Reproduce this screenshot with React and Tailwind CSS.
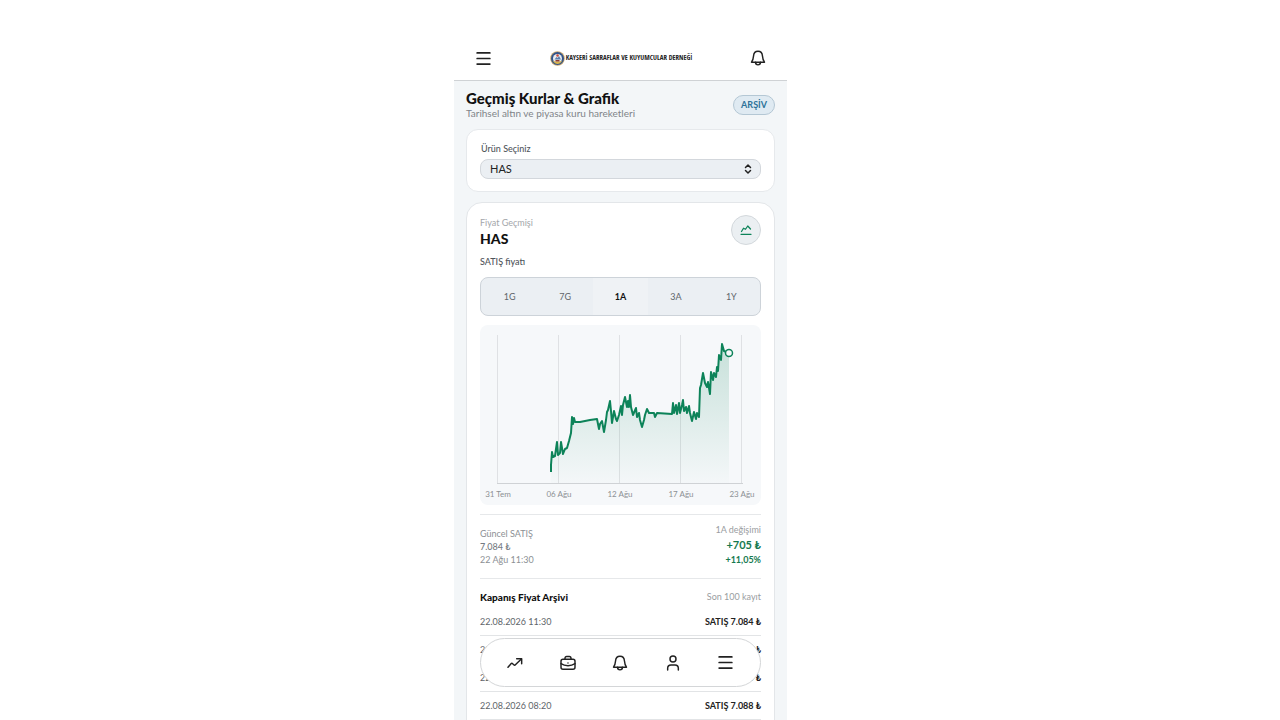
import React, { useState } from "react";
import { ChevronsUpDown, Menu } from "lucide-react";

const ranges = ["1G", "7G", "1A", "3A", "1Y"];

const closings = [
  { date: "22.08.2026 11:30", price: "7.084" },
  { date: "22.08.2026 10:20", price: "7.084" },
  { date: "22.08.2026 09:20", price: "7.086" },
  { date: "22.08.2026 08:20", price: "7.088" },
];

const axisTicks = [
  { x: 18, label: "31 Tem" },
  { x: 79, label: "06 Ağu" },
  { x: 140, label: "12 Ağu" },
  { x: 201, label: "17 Ağu" },
  { x: 262, label: "23 Ağu" },
];

const pricePoints = [
  [71, 147], [71, 140], [72, 127], [73, 132], [75, 131], [77, 117], [78, 130], [80, 128],
  [81, 117], [83, 129], [85, 124], [87, 123], [89, 116], [91, 108], [92, 92], [93, 99],
  [94, 93], [95, 97], [100, 97], [110, 95], [117, 94], [119, 104], [120, 99], [122, 96],
  [124, 107], [126, 95], [127, 87], [128, 85], [130, 76], [131, 86], [132, 98], [134, 86],
  [136, 94], [137, 96], [139, 90], [141, 81], [142, 90], [143, 80], [145, 72], [147, 82],
  [148, 76], [149, 82], [150, 70], [151, 82], [153, 90], [156, 83], [157, 92], [159, 88],
  [160, 95], [162, 102], [164, 95], [165, 90], [167, 84], [169, 88], [174, 88], [175, 92],
  [177, 88], [192, 89], [193, 78], [194, 88], [196, 80], [197, 89], [199, 78], [200, 88],
  [202, 80], [203, 75], [204, 86], [206, 82], [207, 88], [209, 81], [210, 88], [212, 96],
  [214, 87], [216, 94], [217, 88], [219, 92], [220, 63], [221, 60], [223, 48], [225, 58],
  [227, 62], [228, 57], [230, 69], [231, 47], [233, 55], [234, 48], [236, 52], [237, 42],
  [238, 46], [239, 30], [241, 35], [242, 19], [244, 26], [249, 28],
];

function BellIcon({ className }) {
  return (
    <svg className={className} viewBox="0 0 24 24" fill="none" stroke="currentColor" strokeWidth="2.2" strokeLinecap="round" strokeLinejoin="round" aria-hidden="true">
      <path d="M12 2C8 2 5.600 5 5.300 9 5 13.500 4.500 15 2.300 18.300h19.400C19.500 15 19 13.500 18.700 9 18.400 5 16 2 12 2z" />
      <path d="M8.300 18.500c0 2.300 1.600 3.800 3.700 3.800s3.700-1.500 3.700-3.800" />
    </svg>
  );
}

function TrendIcon({ className }) {
  return (
    <svg className={className} viewBox="0 0 24 24" fill="none" stroke="currentColor" strokeWidth="2.2" strokeLinecap="round" strokeLinejoin="round" aria-hidden="true">
      <path d="M1.500 18.500l4.500-5.500c.8-.9 1.700-.9 2.500 0l1.700 1.700c.8.8 1.700.8 2.400-.1L21.500 6" />
      <path d="M14.500 5.500H22V13" />
    </svg>
  );
}

function BriefcaseIcon({ className }) {
  return (
    <svg className={className} viewBox="0 0 24 24" fill="none" stroke="currentColor" strokeWidth="2.2" strokeLinecap="round" strokeLinejoin="round" aria-hidden="true">
      <rect x="1.500" y="6.500" width="21" height="15" rx="3" />
      <path d="M7.500 6.500V5c0-1.700 1-2.800 2.500-2.800h4c1.500 0 2.500 1.100 2.500 2.800v1.500" />
      <path d="M1.500 13c3 2 6.500 3 10.500 3s7.500-1 10.500-3M12 12v.1" />
    </svg>
  );
}

function PersonIcon({ className }) {
  return (
    <svg className={className} viewBox="0 0 24 24" fill="none" stroke="currentColor" strokeWidth="2.2" strokeLinecap="round" strokeLinejoin="round" aria-hidden="true">
      <circle cx="12" cy="6" r="4.500" />
      <path d="M4 22.500V20c0-3 2-5 5-5h6c3 0 5 2 5 5v2.500" />
    </svg>
  );
}

function ChartIcon({ className }) {
  return (
    <svg className={className} viewBox="0 0 24 24" fill="none" stroke="currentColor" strokeWidth="2.500" strokeLinecap="round" strokeLinejoin="round" aria-hidden="true">
      <path d="M3 15l4-6.500 4 2 4.500-6.500 5.500 6" />
      <path d="M2 20.500h20" />
    </svg>
  );
}

function Emblem({ className }) {
  return (
    <svg className={className} viewBox="0 0 30 30" aria-hidden="true">
      <circle cx="15" cy="15" r="14.500" fill="#c9a66b" />
      <circle cx="15" cy="15" r="13" fill="#31548c" />
      <circle cx="15" cy="15" r="9" fill="#e9edf0" />
      <path d="M5 19c3 5 7 7 10 7s7-2 10-7c-3 2-6 2-10 2s-7 0-10-2z" fill="#d9b44a" />
      <path d="M9 17l4-5 2 2 3-4 4 7z" fill="#5d7fae" />
      <circle cx="15" cy="9" r="2.500" fill="#c8493a" />
      <path d="M11 18h8v3h-8z" fill="#8c3b33" />
    </svg>
  );
}

function PriceChart() {
  const line = pricePoints.map(([x, y]) => `${x},${y}`).join(" ");

  return (
    <svg className="block w-full rounded-lg bg-[#f6f8fa]" viewBox="0 0 281 180" role="img" aria-label="HAS fiyat grafiği">
      <defs>
        <linearGradient id="priceFill" x1="0" y1="0" x2="0" y2="1">
          <stop offset="0" stopColor="#0d8359" stopOpacity="0.2" />
          <stop offset="1" stopColor="#0d8359" stopOpacity="0.01" />
        </linearGradient>
      </defs>
      {axisTicks.map((tick) => (
        <g key={tick.label}>
          <path d={`M${tick.x - 0.5} 10V159`} stroke="#dfe1e4" />
          <text x={tick.x} y="172" textAnchor="middle" fontSize="8" fill="#8c9094">{tick.label}</text>
        </g>
      ))}
      <path d="M17 158.500H263" stroke="#cfd2d5" />
      <polygon points={`71,158 ${line} 249,158`} fill="url(#priceFill)" />
      <polyline points={line} fill="none" stroke="#0d8359" strokeWidth="2" strokeLinejoin="round" />
      <circle cx="249" cy="28" r="3.500" fill="#f6f8fa" stroke="#0d8359" strokeWidth="1.500" />
    </svg>
  );
}

function Header() {
  return (
    <header className="flex h-[81px] shrink-0 items-center justify-between border-b border-[#cfd2d5] bg-white px-5 pt-9">
      <button type="button" aria-label="Menü" className="text-[#222]">
        <Menu className="size-[19px]" strokeWidth={2.2} />
      </button>
      <div className="flex items-center gap-px">
        <Emblem className="size-[15px]" />
        <span className="whitespace-nowrap font-['Open_Sans_Condensed','Noto_Sans_ExtraCondensed','Roboto_Condensed',sans-serif] text-[7px] leading-3 font-semibold text-[#222]">
          KAYSERİ SARRAFLAR VE KUYUMCULAR DERNEĞİ
        </span>
      </div>
      <button type="button" aria-label="Bildirimler" className="px-px text-[#222]">
        <BellIcon className="size-4" />
      </button>
    </header>
  );
}

function BottomNav() {
  return (
    <nav className="absolute inset-x-[26px] bottom-[33px] grid h-[49px] grid-cols-5 place-items-center rounded-full border border-[#d4d6d8] bg-white px-2 text-[#222]" aria-label="Alt menü">
      <button type="button" aria-label="Piyasa"><TrendIcon className="size-4" /></button>
      <button type="button" aria-label="Portföy"><BriefcaseIcon className="size-4" /></button>
      <button type="button" aria-label="Bildirimler"><BellIcon className="size-4" /></button>
      <button type="button" aria-label="Profil"><PersonIcon className="size-4" /></button>
      <button type="button" aria-label="Menü"><Menu className="size-[19px]" strokeWidth={2.2} /></button>
    </nav>
  );
}

export default function App() {
  const [range, setRange] = useState("1A");
  const [product, setProduct] = useState("HAS");

  return (
    <div className="flex h-screen justify-center bg-white pr-[39px] font-['Lato',sans-serif] text-[9px] leading-3">
      <div className="relative flex w-full max-w-[333px] flex-col overflow-hidden bg-[#f3f6f8]">
        <Header />

        <main className="flex flex-col px-3">
          <div className="flex items-center justify-between pt-[9px] pb-[9px]">
            <div>
              <h1 className="text-[15px] leading-4 font-black text-[#111]">Geçmiş Kurlar & Grafik</h1>
              <p className="text-[10px] leading-[14px] text-[#808488]">Tarihsel altın ve piyasa kuru hareketleri</p>
            </div>
            <span className="flex h-5 items-center rounded-full border border-[#b4c7d4] bg-[#dfeaf2] px-[7px] font-bold text-[#2d7299]">ARŞİV</span>
          </div>

          <section className="mb-[10px] flex flex-col gap-[3px] rounded-xl border border-[#e6e9ec] bg-white px-[13px] pt-3 pb-3">
            <label htmlFor="product" className="px-px leading-[14px] font-medium text-[#50555b]">Ürün Seçiniz</label>
            <div className="relative">
              <select
                id="product"
                value={product}
                onChange={(e) => setProduct(e.target.value)}
                className="block h-5 w-full appearance-none rounded-lg border border-[#d3d7dc] bg-[#ebeff3] px-[9px] text-[11px] leading-4 text-[#222]"
              >
                <option>HAS</option>
              </select>
              <ChevronsUpDown className="pointer-events-none absolute top-1 right-[7px] size-3 text-[#222]" strokeWidth={3} />
            </div>
          </section>

          <section className="rounded-t-2xl border border-[#e3e6e9] bg-white px-[13px] pt-3">
            <div className="flex items-start justify-between">
              <div>
                <p className="leading-4 text-[#a3a6aa]">Fiyat Geçmişi</p>
                <h2 className="text-[14px] leading-4 font-black text-[#111]">{product}</h2>
              </div>
              <button type="button" aria-label="Grafik" className="flex size-[30px] items-center justify-center rounded-full border border-[#d3d8dc] bg-[#ebeff2] text-[#0d8359]">
                <ChartIcon className="size-3" />
              </button>
            </div>
            <p className="mt-2 leading-[14px] font-medium text-[#50555b]">SATIŞ fiyatı</p>

            <div className="mt-2 grid h-[39px] grid-cols-5 rounded-lg border border-[#cdd3d9] bg-[#ebeff3] px-px">
              {ranges.map((item) => (
                <button
                  key={item}
                  type="button"
                  aria-pressed={item === range}
                  onClick={() => setRange(item)}
                  className={item === range ? "bg-[#eff2f5] font-bold text-[#111]" : "rounded-lg text-[#60656a]"}
                >
                  {item}
                </button>
              ))}
            </div>

            <div className="mt-[9px]">
              <PriceChart />
            </div>

            <div className="mt-[9px] flex items-end justify-between border-y border-[#e6e8ea] pt-[7px] pb-[11px]">
              <div className="text-[#8c9094]">
                <p className="leading-[14px]">Güncel SATIŞ</p>
                <p className="leading-3 font-medium text-[#757b82]">7.084 ₺</p>
                <p className="leading-[14px]">22 Ağu 11:30</p>
              </div>
              <div className="text-right">
                <p className="leading-[15px] text-[#9a9da1]">1A değişimi</p>
                <p className="text-[11px] leading-4 font-bold text-[#16794f]">+705 ₺</p>
                <p className="leading-[14px] font-bold text-[#16794f]">+11,05%</p>
              </div>
            </div>

            <div className="flex h-[29px] items-end justify-between pb-1">
              <h3 className="text-[10px] leading-[14px] font-black text-[#111]">Kapanış Fiyat Arşivi</h3>
              <span className="leading-[14px] text-[#9a9da1]">Son 100 kayıt</span>
            </div>
            <ul>
              {closings.map((row) => (
                <li key={row.date} className="flex h-7 items-center justify-between border-b border-[#e2e4e6]">
                  <span className="text-[#60656a]">{row.date}</span>
                  <strong className="font-bold text-[#222]">SATIŞ {row.price} ₺</strong>
                </li>
              ))}
            </ul>
          </section>
        </main>

        <BottomNav />
      </div>
    </div>
  );
}
